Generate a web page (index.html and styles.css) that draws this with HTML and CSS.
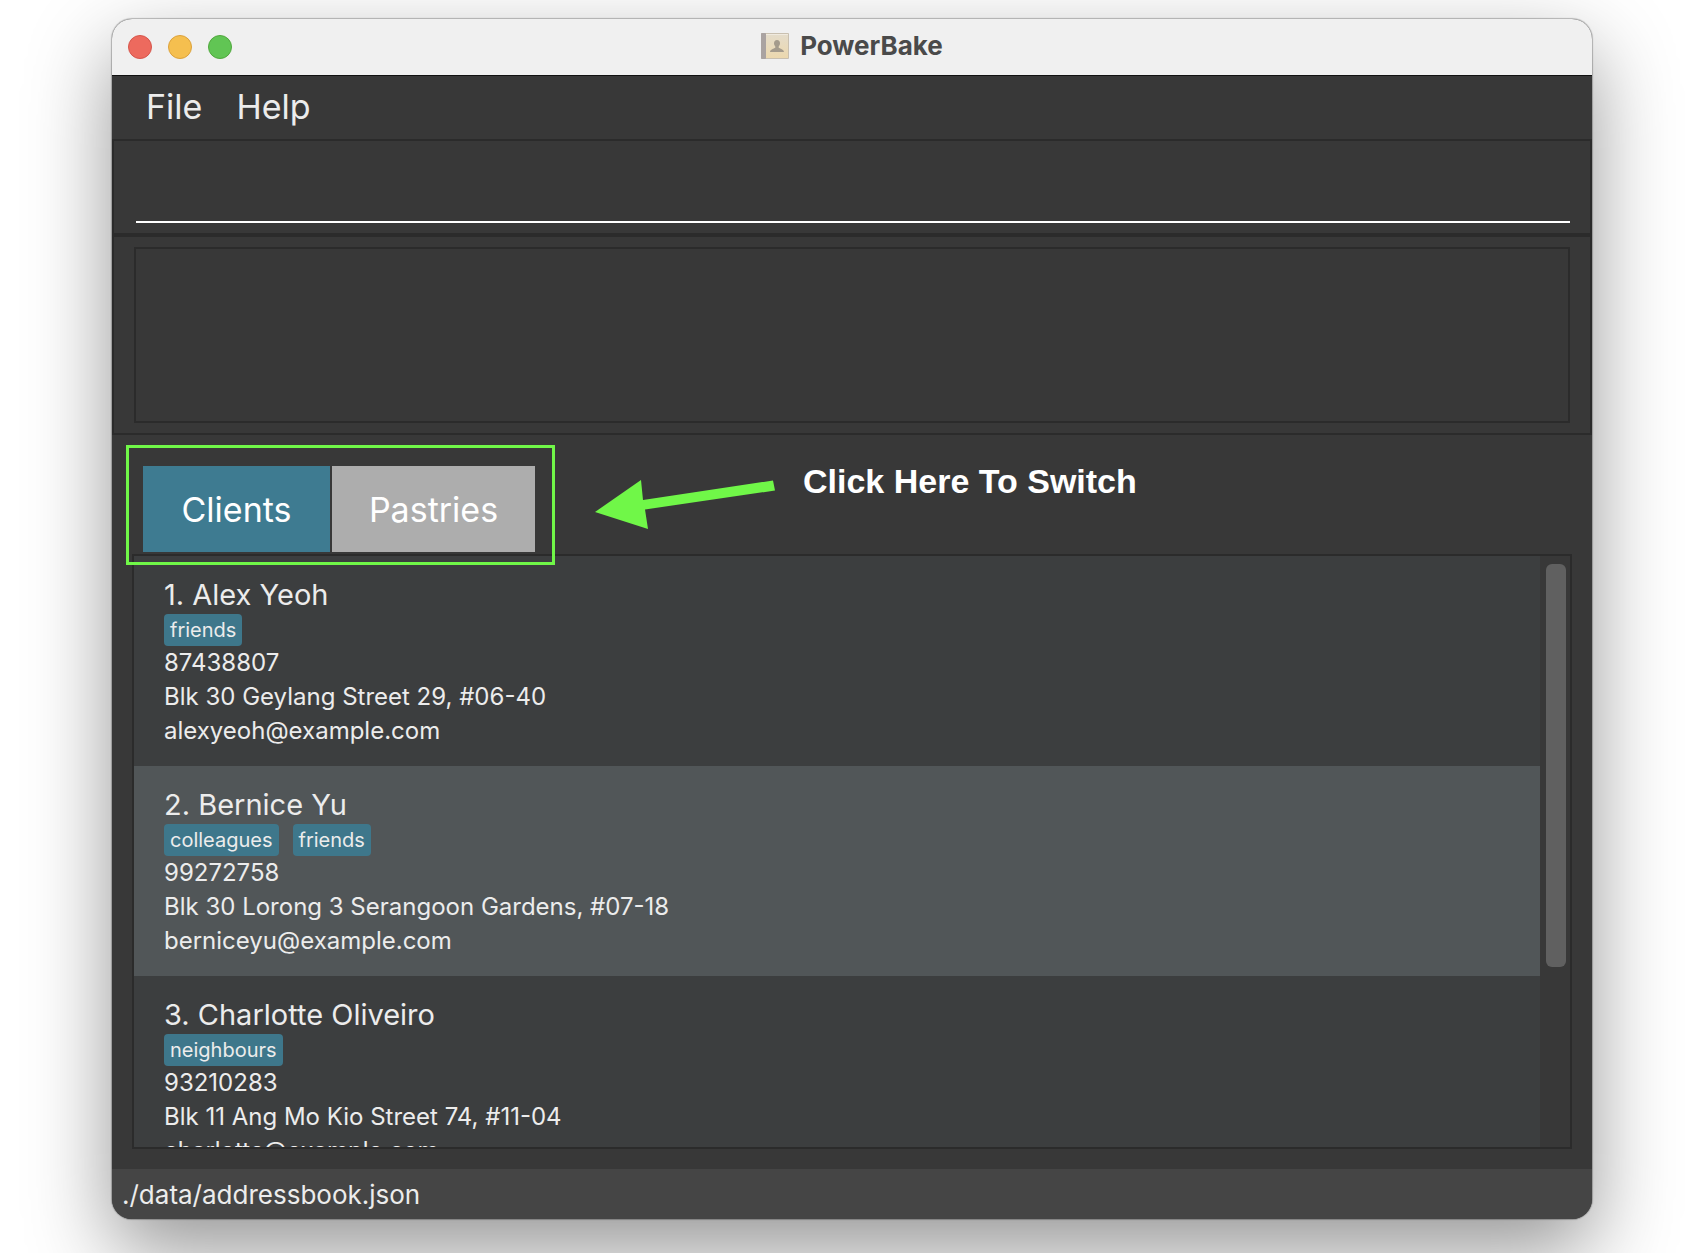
FILE: index.html
```html
<!DOCTYPE html>
<html lang="en">
<head>
<meta charset="utf-8">
<title>PowerBake</title>
<link rel="stylesheet" href="styles.css">
</head>
<body>
<div class="window">
  <header class="titlebar">
    <div class="lights">
      <button class="light light-close" type="button" aria-label="Close"></button>
      <button class="light light-min" type="button" aria-label="Minimise"></button>
      <button class="light light-zoom" type="button" aria-label="Zoom"></button>
    </div>
    <h1 class="title">
      <svg class="title-icon" width="28" height="28" viewBox="0 0 28 28" aria-hidden="true">
        <defs>
          <linearGradient id="cover" x1="0" y1="0" x2="0" y2="1">
            <stop offset="0" stop-color="#e4dccb"/>
            <stop offset="1" stop-color="#ecd8ae"/>
          </linearGradient>
        </defs>
        <rect x="0" y="1" width="28" height="26" rx="1" fill="#c9c0b0"/>
        <rect x="0" y="1" width="5" height="26" rx="1" fill="#aaa3a1"/>
        <rect x="5" y="2" width="22" height="24" fill="url(#cover)"/>
        <path d="M5 2h22v1H5z" fill="#f0eadf"/>
        <path d="M16 8c-2 0-3 1.300-3 3.200 0 1.400.6 2.400 1.300 3.200v1.300c-1.500 1-5 1.300-5.300 4.300h14c-.3-3-3.800-3.300-5.300-4.300v-1.300c.7-.8 1.300-1.800 1.300-3.200C19 9.300 18 8 16 8z" fill="#a49b8c"/>
      </svg>
      <span>PowerBake</span>
    </h1>
  </header>

  <nav class="menubar">
    <button class="menu" type="button">File</button>
    <button class="menu" type="button">Help</button>
  </nav>

  <div class="command">
    <input class="command-input" type="text" aria-label="Command">
  </div>

  <div class="result">
    <textarea class="result-text" readonly aria-label="Result"></textarea>
  </div>

  <main class="content">
    <div class="tabbar">
      <div class="tabs" role="tablist">
        <button class="tab tab-active" type="button" role="tab" aria-selected="true">Clients</button>
        <button class="tab" type="button" role="tab" aria-selected="false">Pastries</button>
        <div class="highlight"></div>
      </div>
      <svg class="arrow" width="180" height="50" viewBox="0 0 180 50" aria-hidden="true">
        <path d="M0 32 46 0 48 20 178 .5 180 10.500 50 29.500 53 49z" fill="#70f748"/>
      </svg>
      <p class="hint">Click Here To Switch</p>
    </div>

    <div class="list">
      <ol class="rows">
        <li class="row">
          <h2 class="name">1. Alex Yeoh</h2>
          <div class="tags"><span class="tag">friends</span></div>
          <p class="field">87438807</p>
          <p class="field">Blk 30 Geylang Street 29, #06-40</p>
          <p class="field">alexyeoh@example.com</p>
        </li>
        <li class="row">
          <h2 class="name">2. Bernice Yu</h2>
          <div class="tags"><span class="tag">colleagues</span><span class="tag">friends</span></div>
          <p class="field">99272758</p>
          <p class="field">Blk 30 Lorong 3 Serangoon Gardens, #07-18</p>
          <p class="field">berniceyu@example.com</p>
        </li>
        <li class="row">
          <h2 class="name">3. Charlotte Oliveiro</h2>
          <div class="tags"><span class="tag">neighbours</span></div>
          <p class="field">93210283</p>
          <p class="field">Blk 11 Ang Mo Kio Street 74, #11-04</p>
          <p class="field">charlotte@example.com</p>
        </li>
      </ol>
      <div class="scrollbar"><div class="thumb"></div></div>
    </div>
  </main>

  <footer class="status">./data/addressbook.json</footer>
</div>
</body>
</html>
```
FILE: styles.css
```css
* {
  box-sizing: border-box;
}

body {
  margin: 0;
  height: 100vh;
  padding: 19px 112px 34px;
  overflow: hidden;
  background: #fff;
  color: #ececec;
  font-family: Inter, "Liberation Sans", sans-serif;
}

button {
  border: 0;
  font-family: inherit;
}

.window {
  display: flex;
  flex-direction: column;
  height: 100%;
  overflow: hidden;
  border-radius: 20px;
  background: #383838;
  box-shadow: 0 0 1px 1px rgba(0, 0, 0, 0.25), 0 32px 84px rgba(0, 0, 0, 0.42);
}

.titlebar {
  display: grid;
  grid-template-columns: 1fr auto 1fr;
  align-items: center;
  flex: none;
  height: 57px;
  padding: 0 16px;
  border-bottom: 1px solid #111;
  background: #f0f0f0;
}

.lights {
  display: flex;
  gap: 16px;
}

.light {
  width: 24px;
  height: 24px;
  padding: 0;
  border: 1px solid;
  border-radius: 50%;
}

.light-close {
  border-color: #d5564c;
  background: #ed6a5e;
}

.light-min {
  border-color: #dba13c;
  background: #f5bf4f;
}

.light-zoom {
  border-color: #51a73e;
  background: #61c554;
}

.title {
  display: flex;
  align-items: center;
  gap: 11px;
  margin: 0;
  padding-bottom: 2px;
  color: #4a4a4a;
  font-size: 26px;
  font-weight: 700;
  line-height: 32px;
}

.menubar {
  display: flex;
  flex: none;
  height: 63px;
  padding: 0 16px 2px;
}

.menu {
  padding: 0 18px;
  background: none;
  color: #ececec;
  font-size: 34px;
}

.menu + .menu {
  padding-left: 16px;
}

.command {
  flex: none;
  height: 96px;
  padding: 20px 20px 10px 22px;
  border: 2px solid #2b2b2b;
}

.command-input {
  display: block;
  width: 100%;
  height: 62px;
  padding: 0;
  border: 0;
  border-bottom: 2px solid #fff;
  outline: 0;
  background: none;
  color: #fff;
  font: 34px Inter, sans-serif;
}

.result {
  flex: none;
  height: 200px;
  padding: 10px 20px;
  border: 2px solid #2b2b2b;
}

.result-text {
  display: block;
  width: 100%;
  height: 176px;
  border: 2px solid #2b2b2b;
  outline: 0;
  resize: none;
  background: none;
  color: #fff;
  font: 24px Inter, sans-serif;
}

.content {
  display: flex;
  flex: 1;
  flex-direction: column;
  min-height: 0;
  padding: 31px 20px 20px;
}

.tabbar {
  display: flex;
  flex: none;
  height: 88px;
  padding: 0 11px 2px;
}

.tabs {
  position: relative;
  display: grid;
  grid-template-columns: 187px 203px;
  gap: 2px;
}

.tab {
  padding: 0;
  background: #adadad;
  color: #fff;
  font-size: 34px;
}

.tab-active {
  background: #3e7b91;
}

.highlight {
  position: absolute;
  inset: -21px -20px -13px -17px;
  border: 3px solid #70f748;
  pointer-events: none;
}

.arrow {
  flex: none;
  margin: 14px 28px 0 60px;
}

.hint {
  margin: 0;
  color: #fff;
  font: bold 34px/30px "Liberation Sans", Arial, sans-serif;
}

.list {
  display: flex;
  flex: 1;
  min-height: 0;
  border: 2px solid #2b2b2b;
}

.rows {
  flex: 1;
  margin: 0;
  padding: 0;
  overflow: hidden;
  list-style: none;
}

.row {
  height: 210px;
  padding: 20px 30px 18px;
  background: #3c3e3f;
}

.row:nth-child(even) {
  background: #515658;
}

.name {
  margin: 0;
  font-size: 29px;
  font-weight: 400;
  line-height: 38px;
}

.tags {
  display: flex;
  gap: 14px;
}

.tag {
  padding: 0 6px;
  border-radius: 4px;
  background: #3e778b;
  font-size: 20px;
  line-height: 32px;
}

.field {
  margin: 0;
  font-size: 24px;
  line-height: 34px;
}

.scrollbar {
  flex: none;
  width: 30px;
  padding: 8px 4px 8px 6px;
}

.thumb {
  height: 70%;
  border-radius: 6px;
  background: #606060;
}

.status {
  flex: none;
  padding: 2px 10px 0;
  background: #454545;
  font-size: 26px;
  line-height: 48px;
}
```
